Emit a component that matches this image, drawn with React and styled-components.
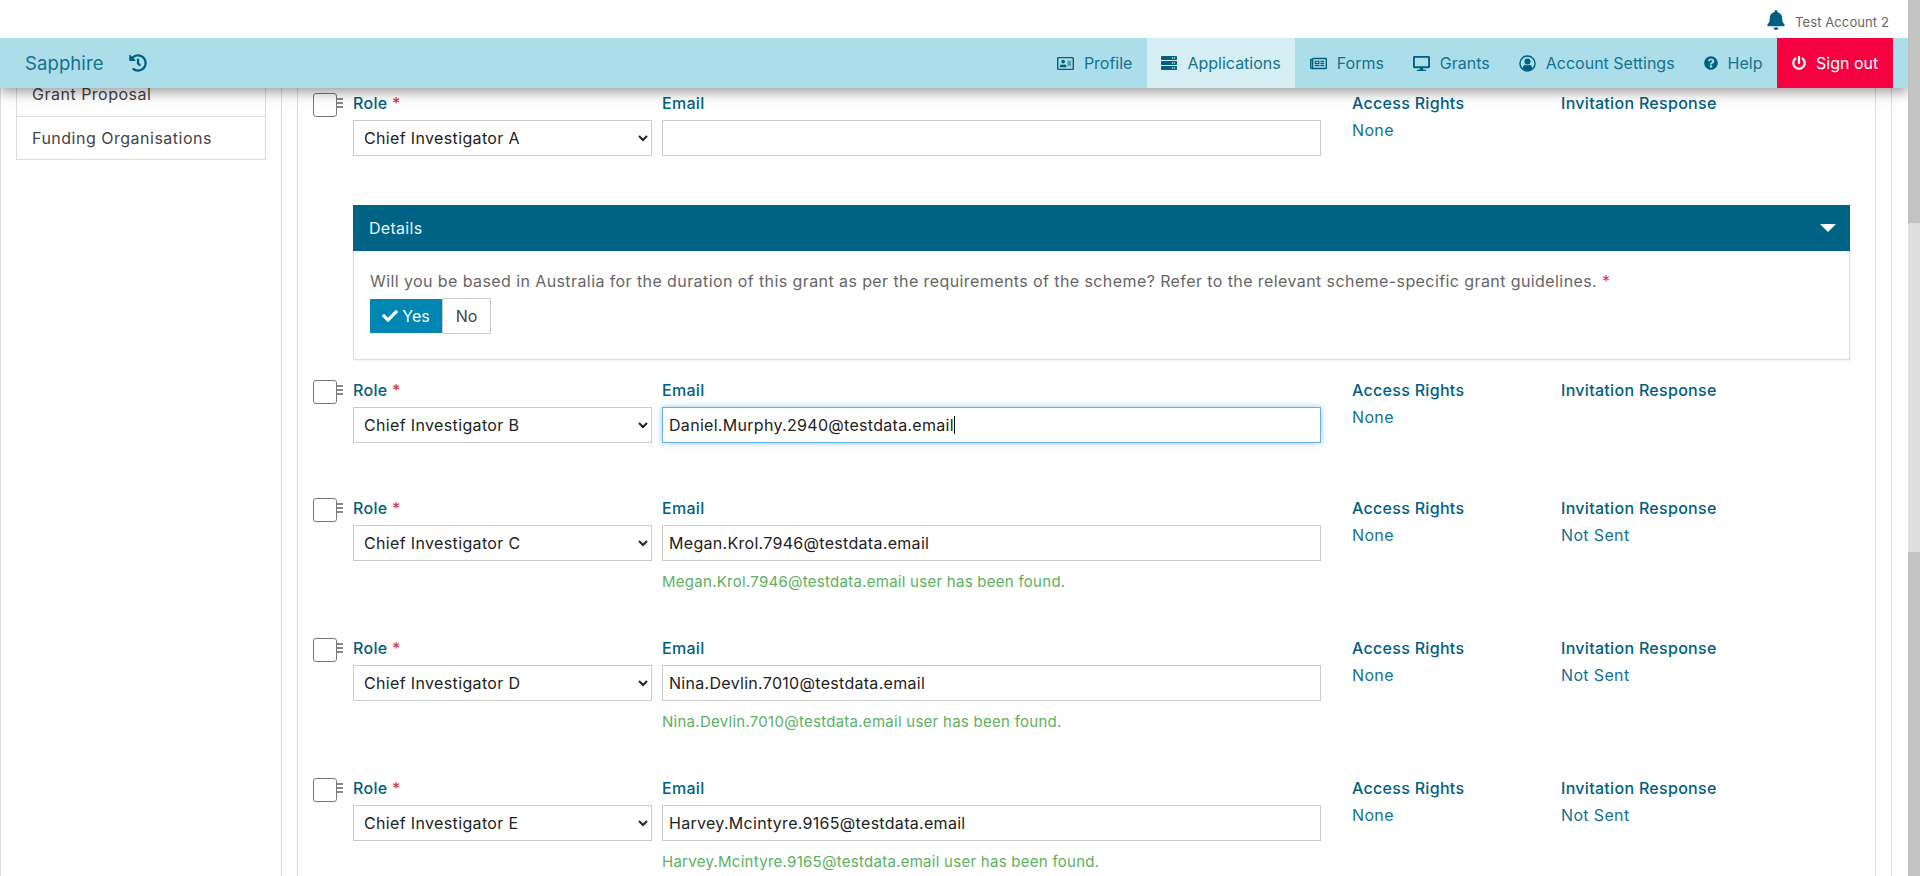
import React from 'react';
import styled, { createGlobalStyle } from 'styled-components';
import { FaHistory, FaRegAddressCard, FaServer, FaRegNewspaper, FaDesktop, FaQuestionCircle, FaPowerOff, FaBell, FaCheck } from 'react-icons/fa';

const Global = createGlobalStyle`
  html, body { margin: 0; padding: 0; height: 876px; overflow: hidden; background: #fff; }
  * { box-sizing: border-box; }
  body { font-family: Inter, "Noto Sans", sans-serif; font-size: 16px; }
`;

const Shell = styled.div`display: flex; width: 1920px; height: 876px; overflow: hidden;`;
const Page = styled.div`width: 1908px; display: flex; flex-direction: column; height: 100%;`;
const Track = styled.div`width: 12px; height: 100%; position: relative; z-index: 6; background: #c4c4c4; border-left: 1px solid #bbb; padding-top: 223px;`;
const Thumb = styled.div`height: 329px; margin-left: -1px; width: 12px; background: #dedede;`;

const TopStrip = styled.div`height: 38px; position: relative; z-index: 6; background: #fff; display: flex; justify-content: flex-end; align-items: center; gap: 9px; padding: 5px 19px 0 0;`;
const Bell = styled(FaBell)`color: #00607f; font-size: 20px; margin-top: -4px;`;
const Account = styled.span`font-size: 13px; letter-spacing: 0.1px; color: #666;`;

const Nav = styled.nav`height: 50px; background: #acdeea; display: flex; align-items: stretch; position: relative; z-index: 5; box-shadow: 0 4px 12px rgba(0,0,0,.4); padding: 0 15px 0 25px;`;
const Brand = styled.span`align-self: center; font-size: 18.5px; color: #14728f; letter-spacing: 0.1px;`;
const HistoryIcon = styled(FaHistory)`align-self: center; color: #00607f; font-size: 18px; margin-left: 25px;`;
const Spacer = styled.div`flex: 1;`;
const NavItem = styled.a`
  display: flex; align-items: center; gap: 10px; padding: 0 14.5px; font-size: 16px;
  color: #14728f; background: ${p => p.$active ? '#d4eef4' : 'transparent'};
  svg { color: #00607f; font-size: ${p => p.$icon || 17}px; }
`;
const SignOut = styled.a`
  display: flex; align-items: center; gap: 10px; padding: 0 15px; width: 116px; font-size: 16px; color: #fff; background: #f50040; white-space: nowrap;
  svg { font-size: 14px; flex: none; }
`;

const Body = styled.div`flex: 1; display: flex; min-height: 0;`;
const Sidebar = styled.aside`width: 282px; border-left: 1px solid #ddd; border-right: 1px solid #ddd; padding: 0 15px;`;
const SideList = styled.ul`list-style: none; margin: -15px 0 0; padding: 0; border: 1px solid #ddd; border-top: 0;`;
const SideItem = styled.li`height: 43px; line-height: 42px; padding-left: 15px; font-size: 16px; letter-spacing: 0.5px; color: #444; & + & { border-top: 1px solid #ddd; }`;
const Outer = styled.div`width: 1610px; padding: 0 15px; border-right: 1px solid #ddd;`;
const Panel = styled.main`height: 100%; border-left: 1px solid #ddd; border-right: 1px solid #ddd; padding: 5px 20px 0 15px;`;

const Row = styled.section`display: grid; grid-template-columns: 40px 309px 690px 209px 1fr; padding-bottom: ${p => p.$gap ?? 46}px;`;
const Handle = styled.svg`width: 30px; height: 24px; display: block;`;
const Label = styled.div`height: 20px; line-height: 20px; margin-bottom: 7px; font-size: 16px; font-weight: 500; letter-spacing: 0.3px; color: #00607f; white-space: nowrap;`;
const Star = styled.span`color: #d43f3a;`;
const Select = styled.select`width: 299px; height: 36px; border: 1px solid #ccc; background: #fff; padding: 0 6px; font: inherit; font-size: 16px; letter-spacing: 0.35px; color: #222; border-radius: 0; outline: none;`;
const EmailInput = styled.input`width: 659px; height: 36px; border: 1px solid ${p => p.$focus ? '#66afe9' : '#ccc'}; ${p => p.$focus ? 'box-shadow: 0 0 6px rgba(102,175,233,.7);' : ''} padding: 0 6px; font: inherit; font-size: 16px; letter-spacing: 0.3px; color: #222; border-radius: 0; outline: none; background: #fff;`;
const Message = styled.div`margin-top: 9px; line-height: 22px; padding-top: ${p => p.$filled ? 1 : 0}px; margin-bottom: ${p => p.$filled ? -1 : 0}px; font-size: 15px; letter-spacing: 0.27px; color: #5cb060; white-space: nowrap;`;
const Value = styled.div`line-height: 20px; margin-top: 1px; font-size: 16px; letter-spacing: 0.35px; color: #14728f;`;

const Details = styled.section`margin-left: 40px; width: 1497px; margin-bottom: 20px;`;
const DetailsBar = styled.header`height: 46px; background: #006385; color: #e8f4f8; display: flex; align-items: center; justify-content: space-between; padding: 0 14px 0 16px; font-size: 16px; letter-spacing: .3px;`;
const Caret = styled.i`width: 0; height: 0; border-left: 8px solid transparent; border-right: 8px solid transparent; border-top: 8px solid #fff;`;
const DetailsBody = styled.div`height: 109px; border: 1px solid #ddd; border-top: 0; padding: 20px 15px 0 16px; box-shadow: 1px 1px 1px rgba(0,0,0,.04);`;
const Question = styled.p`margin: 0 0 8px; line-height: 20px; font-size: 16px; letter-spacing: 0.41px; color: #666; white-space: nowrap;`;
const Toggle = styled.div`display: flex; align-items: flex-start;`;
const YesBtn = styled.button`height: 34px; width: 72px; border: 0; padding: 0; background: #0086b3; color: #fff; font: inherit; font-size: 16px; display: flex; align-items: center; justify-content: center; gap: 4px; svg { font-size: 16px; }`;
const NoBtn = styled.button`height: 36px; width: 49px; margin-top: -1px; border: 1px solid #ccc; background: #fff; color: #444; font: inherit; font-size: 16px; padding: 0;`;
const CaretLine = styled.span`display: inline-block; width: 1px; height: 18px; background: #111; position: absolute; left: ${p => p.$x}px; top: 9px;`;
const InputWrap = styled.div`position: relative; width: 659px;`;

const UserRing = () => (
  <svg viewBox="0 0 18 18" width="17" height="17" fill="currentColor">
    <circle cx="9" cy="9" r="8" fill="none" stroke="currentColor" strokeWidth="1.5" />
    <circle cx="9" cy="6.9" r="3.2" />
    <path d="M3.6 14.2c.5-2.7 2.3-3.9 3.4-3.9.6.4 1.2.6 2 .6s1.4-.2 2-.6c1.1 0 2.9 1.2 3.4 3.9-1.3 1.5-3.2 2.5-5.4 2.5s-4.1-1-5.4-2.5z" />
  </svg>
);

const Grip = () => (
  <Handle viewBox="0 0 30 24">
    <rect x="0.5" y="0.5" width="23" height="23" rx="2.5" fill="#fff" stroke="#777" />
    <rect x="24" y="5" width="6" height="2" fill="#888" />
    <rect x="24" y="9" width="6" height="2" fill="#888" />
    <rect x="24" y="13" width="6" height="2" fill="#888" />
  </Handle>
);

const Person = ({ role, email, access = 'None', response, found, focus, gap }) => (
  <Row $gap={gap}>
    <Grip />
    <div>
      <Label>Role <Star>*</Star></Label>
      <Select defaultValue={role}><option>{role}</option></Select>
    </div>
    <div>
      <Label>Email</Label>
      <InputWrap>
        <EmailInput $focus={focus} defaultValue={email} />
        {focus && <CaretLine $x={292} />}
      </InputWrap>
      <Message $filled={found}>{found && `${email} user has been found.`}</Message>
    </div>
    <div>
      <Label>Access Rights</Label>
      <Value>{access}</Value>
    </div>
    <div>
      <Label>Invitation Response</Label>
      <Value>{response}</Value>
    </div>
  </Row>
);

export default function App() {
  return (
    <>
      <Global />
      <Shell>
        <Page>
          <TopStrip><Bell /><Account>Test Account 2</Account></TopStrip>
          <Nav>
            <Brand>Sapphire</Brand>
            <HistoryIcon />
            <Spacer />
            <NavItem><FaRegAddressCard />Profile</NavItem>
            <NavItem $active $icon={16}><FaServer />Applications</NavItem>
            <NavItem><FaRegNewspaper />Forms</NavItem>
            <NavItem><FaDesktop />Grants</NavItem>
            <NavItem><UserRing />Account Settings</NavItem>
            <NavItem $icon={14}><FaQuestionCircle />Help</NavItem>
            <SignOut><FaPowerOff />Sign out</SignOut>
          </Nav>
          <Body>
            <Sidebar>
              <SideList>
                <SideItem>Grant Proposal</SideItem>
                <SideItem>Funding Organisations</SideItem>
              </SideList>
            </Sidebar>
            <Outer>
              <Panel>
                <Person role="Chief Investigator A" email="" gap={40} />
                <Details>
                  <DetailsBar>Details<Caret /></DetailsBar>
                  <DetailsBody>
                    <Question>Will you be based in Australia for the duration of this grant as per the requirements of the scheme? Refer to the relevant scheme-specific grant guidelines. <Star>*</Star></Question>
                    <Toggle>
                      <YesBtn><FaCheck />Yes</YesBtn>
                      <NoBtn>No</NoBtn>
                    </Toggle>
                  </DetailsBody>
                </Details>
                <Person role="Chief Investigator B" email="Daniel.Murphy.2940@testdata.email" focus />
                <Person role="Chief Investigator C" email="Megan.Krol.7946@testdata.email" response="Not Sent" found />
                <Person role="Chief Investigator D" email="Nina.Devlin.7010@testdata.email" response="Not Sent" found />
                <Person role="Chief Investigator E" email="Harvey.Mcintyre.9165@testdata.email" response="Not Sent" found />
              </Panel>
            </Outer>
          </Body>
        </Page>
        <Track><Thumb /></Track>
      </Shell>
    </>
  );
}
